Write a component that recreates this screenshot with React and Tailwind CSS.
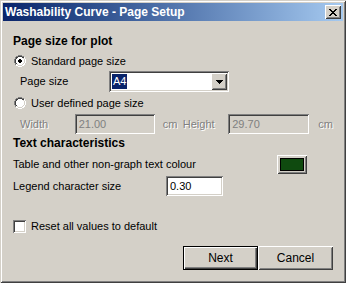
import React from 'react';

const raised = 'shadow-[inset_1px_1px_#ffffff,inset_-1px_-1px_#404040,inset_2px_2px_#d4d0c8,inset_-2px_-2px_#808080]';
const sunken = 'shadow-[inset_1px_1px_#808080,inset_-1px_-1px_#ffffff,inset_2px_2px_#404040,inset_-2px_-2px_#d4d0c8]';
const disabled = 'text-[#808080] [text-shadow:1px_1px_0_#ffffff]';

const Radio = ({ checked }) => (
  <svg width="12" height="12" viewBox="0 0 12 12" className="shrink-0">
    <path d="M4 0h4v1h2v1h1v2h1v4h-1v2h-1v1h-2v1h-4v-1h-2v-1h-1v-2h-1v-4h1v-2h1v-1h2z" fill="#ffffff" />
    <path d="M4 0h4v1h-4zM2 1h2v1h-2zM8 1h2v1h-2zM1 2h1v2h-1zM0 4h1v4h-1zM1 8h1v2h-1z" fill="#808080" />
    <path d="M4 1h4v1h-4zM2 2h2v1h-2zM8 2h2v1h-2zM2 3h1v1h-1zM1 4h1v4h-1zM2 8h1v1h-1z" fill="#404040" />
    <path d="M10 2h1v2h-1zM11 4h1v4h-1zM10 8h1v2h-1zM8 10h2v1h-2zM2 10h2v1h-2zM4 11h4v1h-4z" fill="#ffffff" />
    <path d="M9 3h1v1h-1zM10 4h1v4h-1zM9 8h1v1h-1zM8 9h1v1h-1zM3 9h1v1h-1zM4 10h4v1h-4z" fill="#d4d0c8" />
    {checked && <path d="M5 4h2v1h1v2h-1v1h-2v-1h-1v-2h1z" fill="#000000" />}
  </svg>
);

const Field = ({ value, width, off }) => (
  <div className={`h-[20px] flex items-center pl-[4px] ${width} ${sunken} ${off ? 'bg-[#d4d0c8] text-[#808080]' : 'bg-white text-black'}`}>
    {value}
  </div>
);

export default function App() {
  return (
    <div className={`w-[346px] h-[283px] bg-[#d4d0c8] p-[3px] flex flex-col font-['Liberation_Sans',Arial,sans-serif] text-[11px] text-black shadow-[inset_1px_1px_#d4d0c8,inset_-1px_-1px_#404040,inset_2px_2px_#ffffff,inset_-2px_-2px_#808080]`}>
      {/* title bar */}
      <div className="h-[18px] flex items-center justify-between pl-[2px] pr-[2px] bg-linear-to-r from-[#0a246a] to-[#a6caf0]">
        <span className="font-bold text-white text-[12px]">Washability Curve - Page Setup</span>
        <div className={`w-[16px] h-[14px] bg-[#d4d0c8] flex items-center justify-center ${raised}`}>
          <svg width="8" height="7" viewBox="0 0 8 7">
            <path d="M0 0h2v1h1v1h2v-1h1v-1h2v1h-1v1h-1v1h-1v1h1v1h1v1h1v1h-2v-1h-1v-1h-2v1h-1v1h-2v-1h1v-1h1v-1h1v-1h-1v-1h-1v-1h-1z" fill="#000000" />
          </svg>
        </div>
      </div>

      <div className="flex flex-col pl-[10px] pr-[10px]">
        <div className="mt-[10px] h-[20px] leading-[20px] font-bold text-[12px]">Page size for plot</div>

        <div className="h-[20px] flex items-center pl-[1px] gap-[5px]">
          <Radio checked />
          <span>Standard page size</span>
        </div>

        <div className="h-[21px] flex items-center">
          <span className="w-[96px] pl-[7px]">Page size</span>
          <div className={`w-[120px] h-[21px] bg-white flex items-center justify-between pl-[3px] pr-[2px] ${sunken}`}>
            <span className="bg-[#0a246a] text-white px-[1px] leading-[15px]">A4</span>
            <div className={`w-[16px] h-[17px] bg-[#d4d0c8] flex items-center justify-center ${raised}`}>
              <svg width="7" height="4" viewBox="0 0 7 4">
                <path d="M0 0h7v1h-1v1h-1v1h-1v1h-1v-1h-1v-1h-1v-1h-1z" fill="#000000" />
              </svg>
            </div>
          </div>
        </div>

        <div className="mt-[1px] h-[20px] flex items-center pl-[1px] gap-[5px]">
          <Radio />
          <span>User defined page size</span>
        </div>

        <div className="mt-[1px] h-[20px] flex items-center">
          <span className={`w-[63px] pl-[7px] ${disabled}`}>Width</span>
          <Field value="21.00" width="w-[82px]" off />
          <div className={`w-[75px] flex pl-[8px] ${disabled}`}>
            <span className="w-[20px]">cm</span>
            <span>Height</span>
          </div>
          <Field value="29.70" width="w-[83px]" off />
          <span className={`ml-[9px] ${disabled}`}>cm</span>
        </div>

        <div className="h-[18px] leading-[18px] font-bold text-[12px]">Text characteristics</div>

        <div className="mt-[3px] h-[19px] flex items-center">
          <span className="w-[264px]">Table and other non-graph text colour</span>
          <div className={`w-[30px] h-[19px] bg-[#d4d0c8] p-[3px] ${raised}`}>
            <div className="w-full h-full bg-[#0f4a0f] border border-black" />
          </div>
        </div>

        <div className="mt-[2px] h-[20px] flex items-center">
          <span className="w-[153px]">Legend character size</span>
          <Field value="0.30" width="w-[57px]" />
        </div>

        <div className="mt-[20px] h-[20px] flex items-center gap-[5px]">
          <div className={`w-[13px] h-[13px] bg-white ${sunken}`} />
          <span>Reset all values to default</span>
        </div>

        <div className="mt-[10px] flex justify-end">
          <button className="w-[75px] h-[24px] bg-[#d4d0c8] border border-black shadow-[inset_1px_1px_#ffffff,inset_-1px_-1px_#404040,inset_-2px_-2px_#808080] text-[12px]">
            Next
          </button>
          <button className={`w-[75px] h-[24px] bg-[#d4d0c8] text-[12px] ${raised}`}>
            Cancel
          </button>
        </div>
      </div>
    </div>
  );
}
